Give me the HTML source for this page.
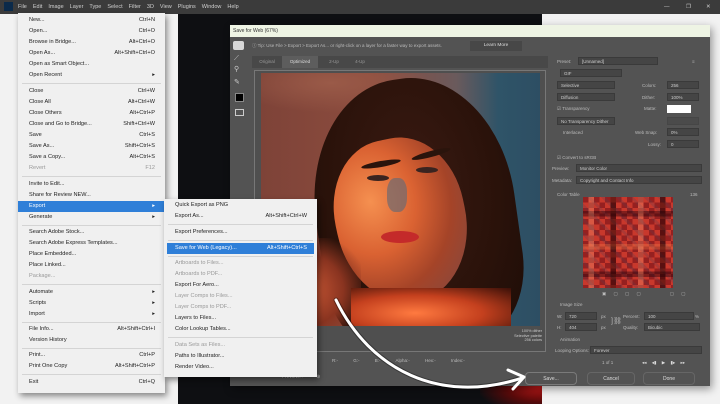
<!DOCTYPE html>
<html><head><style>
*{margin:0;padding:0;box-sizing:border-box}
body{width:720px;height:404px;overflow:hidden;background:#f2f2f2;font-family:"Liberation Sans",sans-serif;position:relative}
.a{position:absolute}
.mb{left:0;top:0;width:720px;height:14px;background:#3b3b3b;color:#cfcfcf;font-size:5.5px;line-height:14px}
.mb span{margin-right:6px}
.menu{background:#f0f0f0;box-shadow:2px 3px 6px rgba(0,0,0,.45);font-size:5.6px;color:#222}
.it{position:absolute;left:0;right:0;height:11px;line-height:11px;padding-left:11px}
.it b{position:absolute;right:10px;font-weight:normal}
.it.dis{color:#999}
.it.hl{background:#2f7fd8;color:#fff}
.sep{position:absolute;left:4px;right:4px;height:1px;background:#d4d4d4}
.dlg{background:#535353}
.dd{position:absolute;background:#454545;border:1px solid #3a3a3a;height:8px;font-size:4.5px;color:#ccc;line-height:7px;padding-left:3px}
.lb{position:absolute;font-size:4.5px;color:#bbb}
.btn{position:absolute;border:1px solid #7a7a7a;border-radius:4px;font-size:5px;color:#ddd;text-align:center;line-height:12px;height:13px}
</style></head><body>
<div class="a mb"><span style="display:inline-block;width:9px;height:9px;background:#0b2a4a;margin:2px 5px 0 4px;vertical-align:top"></span><span>File</span><span>Edit</span><span>Image</span><span>Layer</span><span>Type</span><span>Select</span><span>Filter</span><span>3D</span><span>View</span><span>Plugins</span><span>Window</span><span>Help</span>
<span class="a" style="left:664px;top:0">—</span><span class="a" style="left:686px;top:0">❐</span><span class="a" style="left:706px;top:0">✕</span></div>
<div class="a" style="left:178px;top:14px;width:364px;height:390px;background:#0e0f12"></div>
<div class="a" style="left:480px;top:360px;width:62px;height:44px;background:radial-gradient(ellipse at 95% 60%,#c01818 0,#5a0a0a 40%,transparent 75%)"></div>

<div class="a dlg" style="left:230px;top:25px;width:480px;height:361px;box-shadow:2px 3px 8px rgba(0,0,0,.4)">
 <div class="a" style="left:0;top:0;width:480px;height:12px;background:#eef4e4;font-size:5px;color:#333;line-height:12px;padding-left:3px">Save for Web (67%)</div>
 <div class="a" style="left:22px;top:15px;width:296px;height:12px;font-size:4.5px;color:#bbb;line-height:12px">ⓘ Tip: Use File &gt; Export &gt; Export As... or right-click on a layer for a faster way to export assets.</div>
 <div class="a" style="left:240px;top:16px;width:52px;height:10px;background:#474747;font-size:4.8px;color:#ddd;text-align:center;line-height:10px">Learn More</div>
 <div class="a" style="left:3px;top:16px;width:11px;height:9px;background:#d8d8d8;border-radius:2px"></div>
 <div class="a" style="left:4px;top:30px;font-size:7px;color:#ccc">⟋</div>
 <div class="a" style="left:4px;top:40px;font-size:7px;color:#ccc">⚲</div>
 <div class="a" style="left:4px;top:53px;font-size:7px;color:#ccc">✎</div>
 <div class="a" style="left:5px;top:68px;width:9px;height:9px;background:#000;border:1px solid #888"></div>
 <div class="a" style="left:5px;top:84px;width:9px;height:7px;border:1px solid #ccc"></div>
 <div class="a" style="left:22px;top:31px;width:296px;height:12px;background:#484848"></div>
 <div class="a" style="left:22px;top:31px;width:30px;height:12px;font-size:4.5px;color:#999;line-height:12px;text-align:center">Original</div>
 <div class="a" style="left:52px;top:31px;width:36px;height:12px;background:#5d5d5d;font-size:4.5px;color:#ddd;line-height:12px;text-align:center">Optimized</div>
 <div class="a" style="left:92px;top:31px;width:24px;font-size:4.5px;color:#999;line-height:12px;text-align:center">2-Up</div>
 <div class="a" style="left:118px;top:31px;width:24px;font-size:4.5px;color:#999;line-height:12px;text-align:center">4-Up</div>
 <div class="a" style="left:24px;top:45px;width:292px;height:282px;border:1px solid #777;background:#4f4f4f"></div>
 <div class="a" style="left:31px;top:48px;width:279px;height:253px;overflow:hidden;background:linear-gradient(90deg,#7e4338 0,#8c4c3e 40%,#6a5a5c 70%,#2f5468 85%,#2d4e63 100%)">
  <div class="a" style="left:-30px;top:-20px;width:200px;height:60px;background:radial-gradient(ellipse,#9a5a48 0,transparent 70%)"></div>
  <div class="a" style="left:55px;top:5px;width:200px;height:270px;border-radius:48% 48% 30% 30%;background:radial-gradient(ellipse at 50% 40%,#3a1a12 0,#2a120a 60%,#1c0c07 100%);transform:rotate(-8deg)"></div>
  <div class="a" style="left:75px;top:65px;width:130px;height:165px;border-radius:45% 45% 50% 50%;background:radial-gradient(ellipse at 30% 35%,#f59050 0,#da6232 35%,#a54428 62%,#7a4a48 100%);transform:rotate(-12deg)"></div>
  <div class="a" style="left:100px;top:88px;width:40px;height:6px;border-radius:50%;background:#2a140c;transform:rotate(-10deg)"></div>
  <div class="a" style="left:150px;top:78px;width:40px;height:6px;border-radius:50%;background:#2a140c;transform:rotate(-15deg)"></div>
  <div class="a" style="left:106px;top:102px;width:22px;height:6px;border-radius:50%;background:#3a2420"></div>
  <div class="a" style="left:155px;top:94px;width:22px;height:6px;border-radius:50%;background:#3a2420"></div>
  <div class="a" style="left:126px;top:105px;width:20px;height:34px;border-radius:40%;background:#6d6a70;opacity:.7"></div>
  <div class="a" style="left:120px;top:158px;width:38px;height:12px;border-radius:50%;background:#c42a2a"></div>
  <div class="a" style="left:0;top:165px;width:100px;height:95px;background:radial-gradient(ellipse at 40% 55%,#d8603a 0,#8a3420 50%,transparent 80%)"></div>
  <div class="a" style="left:90px;top:215px;width:160px;height:50px;background:radial-gradient(ellipse at 40% 50%,#ff7a40 0,#c4401e 50%,#3a1008 100%)"></div>
 </div>
 <div class="a" style="left:270px;top:304px;font-size:3.8px;color:#ccc;text-align:right;line-height:4.5px;width:42px">100% dither<br>Selective palette<br>256 colors</div>
 <div class="a" style="left:22px;top:331px;width:298px;height:10px;font-size:4.5px;color:#bbb;line-height:10px;word-spacing:14px;padding-left:80px">R:- G:- B:- Alpha:- Hex:- Index:-</div>
 <div class="a" style="left:22px;top:346px;width:298px;height:14px;font-size:4.8px;color:#bbb;line-height:14px;padding-left:30px">Preview... &nbsp;&nbsp;&nbsp;&nbsp;&nbsp;&nbsp;&nbsp;&nbsp;&nbsp;⊕</div>
 <div class="lb" style="left:327px;top:34px">Preset:</div><div class="dd" style="left:348px;top:32px;width:80px">[Unnamed]</div><div class="lb" style="left:462px;top:34px">≡</div>
 <div class="dd" style="left:330px;top:44px;width:62px">GIF</div>
 <div class="dd" style="left:327px;top:56px;width:58px">Selective</div><div class="lb" style="left:412px;top:58px">Colors:</div><div class="dd" style="left:437px;top:56px;width:32px">256</div>
 <div class="dd" style="left:327px;top:68px;width:58px">Diffusion</div><div class="lb" style="left:412px;top:70px">Dither:</div><div class="dd" style="left:437px;top:68px;width:32px">100%</div>
 <div class="lb" style="left:327px;top:81px">☑ Transparency</div><div class="lb" style="left:414px;top:81px">Matte:</div><div class="a" style="left:437px;top:80px;width:24px;height:8px;background:#fff"></div>
 <div class="dd" style="left:327px;top:92px;width:58px">No Transparency Dither</div><div class="dd" style="left:437px;top:92px;width:32px;opacity:.5"></div>
 <div class="lb" style="left:333px;top:105px">Interlaced</div><div class="lb" style="left:405px;top:105px">Web Snap:</div><div class="dd" style="left:437px;top:103px;width:32px">0%</div>
 <div class="lb" style="left:418px;top:117px">Lossy:</div><div class="dd" style="left:437px;top:115px;width:32px">0</div>
 <div class="lb" style="left:327px;top:130px">☑ Convert to sRGB</div>
 <div class="lb" style="left:322px;top:141px">Preview:</div><div class="dd" style="left:346px;top:139px;width:126px">Monitor Color</div>
 <div class="lb" style="left:322px;top:153px">Metadata:</div><div class="dd" style="left:346px;top:151px;width:126px">Copyright and Contact Info</div>
 <div class="lb" style="left:327px;top:167px">Color Table</div><div class="lb" style="left:460px;top:167px">136</div>
 <div class="a" style="left:353px;top:172px;width:90px;height:91px;background:
  repeating-linear-gradient(90deg,rgba(0,0,0,0) 0 5.5px,rgba(255,160,120,.3) 5.5px 11px,rgba(0,0,0,0) 11px 27.5px,rgba(30,0,0,.5) 27.5px 33px,rgba(0,0,0,0) 33px 49.5px),
  repeating-linear-gradient(0deg,rgba(0,0,0,0) 0 11px,rgba(40,0,10,.45) 11px 16.5px,rgba(0,0,0,0) 16.5px 38.5px,rgba(240,120,70,.35) 38.5px 44px,rgba(0,0,0,0) 44px 60.5px),
  repeating-linear-gradient(45deg,rgba(0,0,0,0) 0 7px,rgba(90,60,80,.25) 7px 10px),
  repeating-conic-gradient(#c8382c 0 25%,#962020 0 50%) 0 0/11px 11px"></div>
 <div class="lb" style="left:372px;top:266px;word-spacing:6px">▣ ▢ ▢ ▢ &nbsp;&nbsp; ▢ ▢</div>
 <div class="lb" style="left:330px;top:277px">Image Size</div>
 <div class="lb" style="left:327px;top:289px">W:</div><div class="dd" style="left:335px;top:287px;width:32px">720</div><div class="lb" style="left:371px;top:289px">px</div>
 <div class="lb" style="left:327px;top:300px">H:</div><div class="dd" style="left:335px;top:298px;width:32px">404</div><div class="lb" style="left:371px;top:300px">px</div>
 <div class="lb" style="left:381px;top:292px;font-size:7px">]⛓</div>
 <div class="lb" style="left:393px;top:289px">Percent:</div><div class="dd" style="left:414px;top:287px;width:50px">100</div><div class="lb" style="left:465px;top:289px">%</div>
 <div class="lb" style="left:393px;top:300px">Quality:</div><div class="dd" style="left:414px;top:298px;width:56px">Bicubic</div>
 <div class="lb" style="left:330px;top:312px">Animation</div>
 <div class="lb" style="left:325px;top:323px">Looping Options:</div><div class="dd" style="left:360px;top:321px;width:112px">Forever</div>
 <div class="lb" style="left:372px;top:335px">1 of 1</div>
 <div class="lb" style="left:412px;top:335px;word-spacing:4px;color:#ddd">◂◂ ◂▮ ▶ ▮▸ ▸▸</div>
 <div class="btn" style="left:295px;top:347px;width:52px">Save...</div>
 <div class="btn" style="left:357px;top:347px;width:48px;border-color:#666">Cancel</div>
 <div class="btn" style="left:413px;top:347px;width:52px;border-color:#666">Done</div>
</div>

<div class="a menu" style="left:18px;top:13px;width:147px;height:380px">
 <div class="it" style="top:2px">New...<b>Ctrl+N</b></div>
 <div class="it" style="top:13px">Open...<b>Ctrl+O</b></div>
 <div class="it" style="top:24px">Browse in Bridge...<b>Alt+Ctrl+O</b></div>
 <div class="it" style="top:35px">Open As...<b>Alt+Shift+Ctrl+O</b></div>
 <div class="it" style="top:46px">Open as Smart Object...</div>
 <div class="it" style="top:57px">Open Recent<b>▸</b></div>
 <div class="sep" style="top:70px"></div>
 <div class="it" style="top:73px">Close<b>Ctrl+W</b></div>
 <div class="it" style="top:84px">Close All<b>Alt+Ctrl+W</b></div>
 <div class="it" style="top:95px">Close Others<b>Alt+Ctrl+P</b></div>
 <div class="it" style="top:106px">Close and Go to Bridge...<b>Shift+Ctrl+W</b></div>
 <div class="it" style="top:117px">Save<b>Ctrl+S</b></div>
 <div class="it" style="top:128px">Save As...<b>Shift+Ctrl+S</b></div>
 <div class="it" style="top:139px">Save a Copy...<b>Alt+Ctrl+S</b></div>
 <div class="it dis" style="top:150px">Revert<b>F12</b></div>
 <div class="sep" style="top:163px"></div>
 <div class="it" style="top:166px">Invite to Edit...</div>
 <div class="it" style="top:177px">Share for Review NEW...</div>
 <div class="it hl" style="top:188px">Export<b>▸</b></div>
 <div class="it" style="top:199px">Generate<b>▸</b></div>
 <div class="sep" style="top:212px"></div>
 <div class="it" style="top:214px">Search Adobe Stock...</div>
 <div class="it" style="top:225px">Search Adobe Express Templates...</div>
 <div class="it" style="top:236px">Place Embedded...</div>
 <div class="it" style="top:247px">Place Linked...</div>
 <div class="it dis" style="top:258px">Package...</div>
 <div class="sep" style="top:271px"></div>
 <div class="it" style="top:274px">Automate<b>▸</b></div>
 <div class="it" style="top:285px">Scripts<b>▸</b></div>
 <div class="it" style="top:296px">Import<b>▸</b></div>
 <div class="sep" style="top:309px"></div>
 <div class="it" style="top:311px">File Info...<b>Alt+Shift+Ctrl+I</b></div>
 <div class="it" style="top:322px">Version History</div>
 <div class="sep" style="top:335px"></div>
 <div class="it" style="top:337px">Print...<b>Ctrl+P</b></div>
 <div class="it" style="top:348px">Print One Copy<b>Alt+Shift+Ctrl+P</b></div>
 <div class="sep" style="top:361px"></div>
 <div class="it" style="top:364px">Exit<b>Ctrl+Q</b></div>
</div>
<div class="a menu" style="left:164px;top:199px;width:153px;height:178px">
 <div class="it" style="top:1px">Quick Export as PNG</div>
 <div class="it" style="top:12px">Export As...<b>Alt+Shift+Ctrl+W</b></div>
 <div class="sep" style="top:25px"></div>
 <div class="it" style="top:28px">Export Preferences...</div>
 <div class="sep" style="top:41px"></div>
 <div class="it hl" style="top:44px;left:3px;right:3px;padding-left:8px">Save for Web (Legacy)...<b style="right:7px">Alt+Shift+Ctrl+S</b></div>
 <div class="sep" style="top:57px"></div>
 <div class="it dis" style="top:59px">Artboards to Files...</div>
 <div class="it dis" style="top:70px">Artboards to PDF...</div>
 <div class="it" style="top:81px">Export For Aero...</div>
 <div class="it dis" style="top:92px">Layer Comps to Files...</div>
 <div class="it dis" style="top:103px">Layer Comps to PDF...</div>
 <div class="it" style="top:114px">Layers to Files...</div>
 <div class="it" style="top:125px">Color Lookup Tables...</div>
 <div class="sep" style="top:138px"></div>
 <div class="it dis" style="top:141px">Data Sets as Files...</div>
 <div class="it" style="top:152px">Paths to Illustrator...</div>
 <div class="it" style="top:163px">Render Video...</div>
</div>
<svg class="a" style="left:0;top:0" width="720" height="404">
 <g fill="none" stroke="#000" stroke-width="5" stroke-linecap="round" opacity=".35">
  <path d="M336 300 C 370 370, 440 405, 522 378"/>
 </g>
 <g fill="none" stroke="#fff" stroke-width="3" stroke-linecap="round" stroke-linejoin="round">
  <path d="M336 300 C 370 370, 440 405, 522 378"/>
  <path d="M508 370 L524 377 L513 389"/>
 </g>
</svg>
</body></html>
